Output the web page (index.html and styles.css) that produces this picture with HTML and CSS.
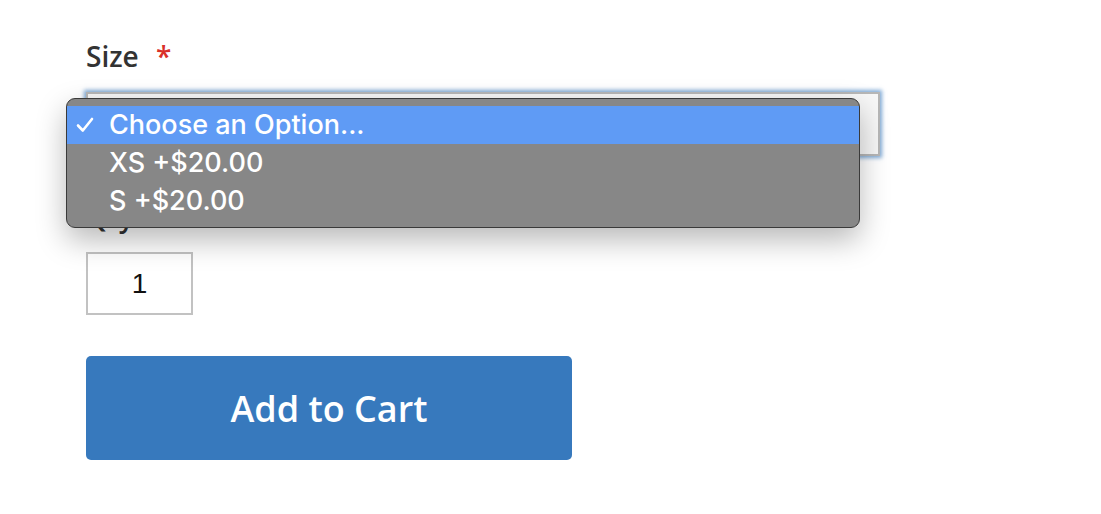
FILE: index.html
```html
<!DOCTYPE html>
<html lang="en">
<head>
  <meta charset="UTF-8" />
  <meta name="viewport" content="width=device-width, initial-scale=1.0" />
  <title>Product Options</title>
  <link rel="stylesheet" href="styles.css">
</head>
<body>

  <form class="product-options">
    <div class="field">
      <label class="field-label">Size <span class="required">*</span></label>
      <div class="select-box"></div>
    </div>

    <div class="field qty">
      <label class="field-label">Qty</label>
      <div class="qty-input">1</div>
    </div>

    <button type="button" class="add-to-cart">Add to Cart</button>

    <div class="option-popup">
      <div class="option selected">
        <svg class="check" width="18" height="16" viewBox="0 0 18 16">
          <path d="M2 8.5 L6.8 13.5 L16 2" fill="none" stroke="#fff" stroke-width="2.6" stroke-linecap="round" stroke-linejoin="round"/>
        </svg>
        Choose an Option...
      </div>
      <div class="option">XS +$20.00</div>
      <div class="option">S +$20.00</div>
    </div>
  </form>

</body>
</html>
```

FILE: styles.css
```css
body {
  margin: 0;
  padding: 0;
  background: #fff;
  font-family: 'Open Sans', sans-serif;
  color: #333;
}

.product-options {
  position: relative;
  padding: 38px 0 0 86px;
  display: flex;
  flex-direction: column;
  align-items: flex-start;
}

.field {
  display: flex;
  flex-direction: column;
  align-items: flex-start;
}

.field-label {
  font-size: 28px;
  font-weight: 600;
  line-height: 36px;
}

.required {
  color: #d9302a;
  margin-left: 10px;
}

.select-box {
  margin-top: 18px;
  width: 794px;
  height: 64px;
  box-sizing: border-box;
  border: 2px solid #b7b7b7;
  background: #f7f7f7;
  box-shadow: 0 0 4px 2px rgba(86, 142, 200, 0.75);
}

.qty {
  margin-top: 42px;
}

.qty-input {
  margin-top: 18px;
  width: 107px;
  height: 63px;
  box-sizing: border-box;
  border: 2px solid #c2c2c2;
  display: flex;
  align-items: center;
  justify-content: center;
  font-family: 'Liberation Sans', Arial, sans-serif;
  font-size: 28px;
  color: #111;
}

.add-to-cart {
  margin-top: 41px;
  width: 486px;
  height: 104px;
  border: none;
  border-radius: 5px;
  background: #3779bd;
  color: #fff;
  font-family: 'Open Sans', sans-serif;
  font-size: 36px;
  font-weight: 600;
}

.option-popup {
  position: absolute;
  left: 66px;
  top: 98px;
  width: 794px;
  height: 130px;
  box-sizing: border-box;
  padding-top: 7px;
  background: #878787;
  border: 1px solid #3a3a3a;
  border-radius: 9px;
  box-shadow: 0 12px 30px rgba(0, 0, 0, 0.28);
  overflow: hidden;
  font-family: Inter, 'Noto Sans', sans-serif;
  font-size: 27px;
  font-weight: 500;
  color: #fff;
}

.option {
  height: 38px;
  line-height: 38px;
  padding-left: 42px;
  position: relative;
}

.option.selected {
  background: #5f9bf5;
}

.check {
  position: absolute;
  left: 9px;
  top: 11px;
}
```
